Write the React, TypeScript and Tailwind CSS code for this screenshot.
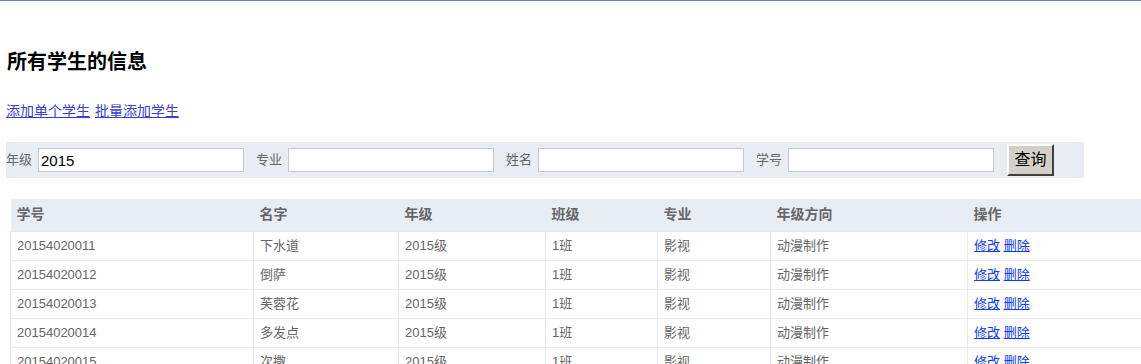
import React from 'react';

const rows = [
	{ id: '20154020011', name: '下水道' },
	{ id: '20154020012', name: '倒萨' },
	{ id: '20154020013', name: '芙蓉花' },
	{ id: '20154020014', name: '多发点' },
	{ id: '20154020015', name: '次撒' },
];

const fields = [
	{ label: '年级', value: '2015' },
	{ label: '专业', value: '' },
	{ label: '姓名', value: '' },
	{ label: '学号', value: '' },
];

const font = "font-['Liberation_Sans','Noto_Sans_CJK_SC',sans-serif]";

const App: React.FC = () => {
	return (
		<div className={`h-[364px] w-[1141px] overflow-hidden bg-white ${font}`}>
			<div className="h-px bg-[#5586b8]" />

			<h3 className="ml-[7px] mt-[49px] text-[20px] font-bold leading-[24px] text-black">
				所有学生的信息
			</h3>

			<div className="ml-[6px] mt-[28px] flex gap-[5px] text-[14px] leading-[18px] text-[#3b3bd6]">
				<a href="#" className="underline">
					添加单个学生
				</a>
				<a href="#" className="underline">
					批量添加学生
				</a>
			</div>

			<form
				className="ml-[6px] mt-[22px] flex h-[36px] w-[1078px] items-center bg-[#e8ecf3] text-[13px] text-[#666]"
				onSubmit={(e) => e.preventDefault()}
			>
				{fields.map((f) => (
					<div key={f.label} className="mr-[12px] flex items-center">
						<span className="w-[28px]">{f.label}</span>
						<input
							type="text"
							defaultValue={f.value}
							className="ml-[4px] h-[24px] w-[206px] border border-[#c8c8c8] bg-white px-[2px] text-[15px] text-black outline-none"
						/>
					</div>
				))}
				<button
					type="submit"
					className="ml-[1px] h-[32px] w-[47px] border-2 border-t-white border-l-white border-r-[#404040] border-b-[#404040] bg-[#d4d0c8] text-[16px] text-black"
				>
					查询
				</button>
			</form>

			<table className="ml-[10px] mt-[21px] w-[1160px] border-collapse text-left text-[13px] text-[#666]">
				<thead>
					<tr className="h-[32px] bg-[#e8ecf3] text-[14px] font-bold">
						<th className="w-[243px] pl-[6px]">学号</th>
						<th className="w-[145px] pl-[6px]">名字</th>
						<th className="w-[147px] pl-[6px]">年级</th>
						<th className="w-[112px] pl-[6px]">班级</th>
						<th className="w-[113px] pl-[6px]">专业</th>
						<th className="w-[197px] pl-[6px]">年级方向</th>
						<th className="pl-[6px]">操作</th>
					</tr>
				</thead>
				<tbody>
					{rows.map((r) => (
						<tr key={r.id} className="h-[29px]">
							<td className="border border-[#e5eaf1] pl-[6px]">{r.id}</td>
							<td className="border border-[#e5eaf1] pl-[6px]">{r.name}</td>
							<td className="border border-[#e5eaf1] pl-[6px]">2015级</td>
							<td className="border border-[#e5eaf1] pl-[6px]">1班</td>
							<td className="border border-[#e5eaf1] pl-[6px]">影视</td>
							<td className="border border-[#e5eaf1] pl-[6px]">动漫制作</td>
							<td className="border border-[#e5eaf1] pl-[6px] text-[#0a3cff]">
								<a href="#" className="underline">
									修改
								</a>{' '}
								<a href="#" className="underline">
									删除
								</a>
							</td>
						</tr>
					))}
				</tbody>
			</table>
		</div>
	);
};

export default App;
